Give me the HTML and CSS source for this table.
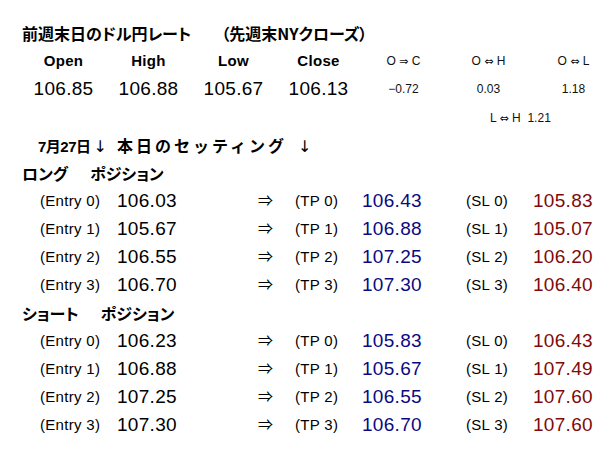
FILE: index.html
```html
<!DOCTYPE html>
<html lang="ja">
<head>
<meta charset="utf-8">
<link rel="stylesheet" href="styles.css">
</head>
<body>
<div class="sheet">
  <div class="row title">前週末日のドル円レート<span class="paren">（先週末NYクローズ）</span></div>
  <div class="row grid7 heads">
    <span>Open</span><span>High</span><span>Low</span><span>Close</span>
    <span class="small">O <span class="sym">⇒</span> C</span><span class="small">O <span class="sym">⇔</span> H</span><span class="small">O <span class="sym">⇔</span> L</span>
  </div>
  <div class="row grid7 vals">
    <span>106.85</span><span>106.88</span><span>105.67</span><span>106.13</span>
    <span class="small">−0.72</span><span class="small">0.03</span><span class="small">1.18</span>
  </div>
  <div class="row range"><span class="small">L <span class="sym">⇔</span> H&nbsp; 1.21</span></div>
  <div class="row setting"><span class="date">7月27日</span><span class="down">↓</span><span class="today">本日のセッティング</span><span class="down">↓</span></div>

  <div class="row section">ロング<span class="gap">ポジション</span></div>
  <div class="row trade"><span class="lab">(Entry 0)</span><span class="num">106.03</span><span class="arrow">⇒</span><span class="lab">(TP 0)</span><span class="num tp">106.43</span><span class="lab">(SL 0)</span><span class="num sl">105.83</span></div>
  <div class="row trade"><span class="lab">(Entry 1)</span><span class="num">105.67</span><span class="arrow">⇒</span><span class="lab">(TP 1)</span><span class="num tp">106.88</span><span class="lab">(SL 1)</span><span class="num sl">105.07</span></div>
  <div class="row trade"><span class="lab">(Entry 2)</span><span class="num">106.55</span><span class="arrow">⇒</span><span class="lab">(TP 2)</span><span class="num tp">107.25</span><span class="lab">(SL 2)</span><span class="num sl">106.20</span></div>
  <div class="row trade"><span class="lab">(Entry 3)</span><span class="num">106.70</span><span class="arrow">⇒</span><span class="lab">(TP 3)</span><span class="num tp">107.30</span><span class="lab">(SL 3)</span><span class="num sl">106.40</span></div>

  <div class="row section">ショート<span class="gap">ポジション</span></div>
  <div class="row trade"><span class="lab">(Entry 0)</span><span class="num">106.23</span><span class="arrow">⇒</span><span class="lab">(TP 0)</span><span class="num tp">105.83</span><span class="lab">(SL 0)</span><span class="num sl">106.43</span></div>
  <div class="row trade"><span class="lab">(Entry 1)</span><span class="num">106.88</span><span class="arrow">⇒</span><span class="lab">(TP 1)</span><span class="num tp">105.67</span><span class="lab">(SL 1)</span><span class="num sl">107.49</span></div>
  <div class="row trade"><span class="lab">(Entry 2)</span><span class="num">107.25</span><span class="arrow">⇒</span><span class="lab">(TP 2)</span><span class="num tp">106.55</span><span class="lab">(SL 2)</span><span class="num sl">107.60</span></div>
  <div class="row trade"><span class="lab">(Entry 3)</span><span class="num">107.30</span><span class="arrow">⇒</span><span class="lab">(TP 3)</span><span class="num tp">106.70</span><span class="lab">(SL 3)</span><span class="num sl">107.60</span></div>
</div>
</body>
</html>
```

FILE: styles.css
```css
html, body {
  margin: 0;
  padding: 0;
  background: #ffffff;
}
body {
  font-family: "Liberation Sans", "Noto Sans CJK JP", sans-serif;
  color: #000000;
}
.sheet {
  padding: 19px 0 0 21px;
  width: 610px;
  box-sizing: border-box;
}
.row {
  height: 28px;
  line-height: 28px;
  white-space: nowrap;
}
.title,
.setting,
.section {
  font-family: "Noto Sans CJK JP", sans-serif;
  font-size: 16px;
  font-weight: 700;
  font-feature-settings: "palt";
}
.title {
  padding-left: 1px;
}
.paren {
  margin-left: 30px;
}
.grid7 {
  display: grid;
  grid-template-columns: repeat(7, 85px);
  text-align: center;
}
.heads {
  font-size: 15px;
  font-weight: 700;
  letter-spacing: 0.3px;
}
.vals {
  font-size: 19px;
  letter-spacing: 0.3px;
}
.small {
  font-size: 12px;
  font-weight: 400;
  letter-spacing: 0;
  color: #111111;
}
.sym {
  font-family: "DejaVu Sans", sans-serif;
  font-size: 11px;
}
.range {
  padding-left: 469px;
}
.setting {
  padding-left: 17px;
}
.date {
  font-family: "Liberation Sans", "Noto Sans CJK JP", sans-serif;
  font-size: 15px;
  letter-spacing: -0.5px;
}
.down {
  font-family: "DejaVu Sans", sans-serif;
  font-weight: 400;
  margin-left: 3px;
}
.today {
  font-feature-settings: normal;
  margin-left: 10px;
  margin-right: 8px;
  letter-spacing: 3px;
}
.section {
  padding-left: 1px;
}
.gap {
  margin-left: 22px;
}
.trade {
  display: grid;
  grid-template-columns: 77px 141px 37px 67px 104px 67px auto;
  padding-left: 19px;
}
.lab {
  font-size: 15px;
  letter-spacing: 0.3px;
}
.num {
  font-size: 19px;
  letter-spacing: 0.3px;
}
.arrow {
  font-size: 15px;
}
.tp {
  color: #0a0a80;
}
.sl {
  color: #800a0a;
}
```
